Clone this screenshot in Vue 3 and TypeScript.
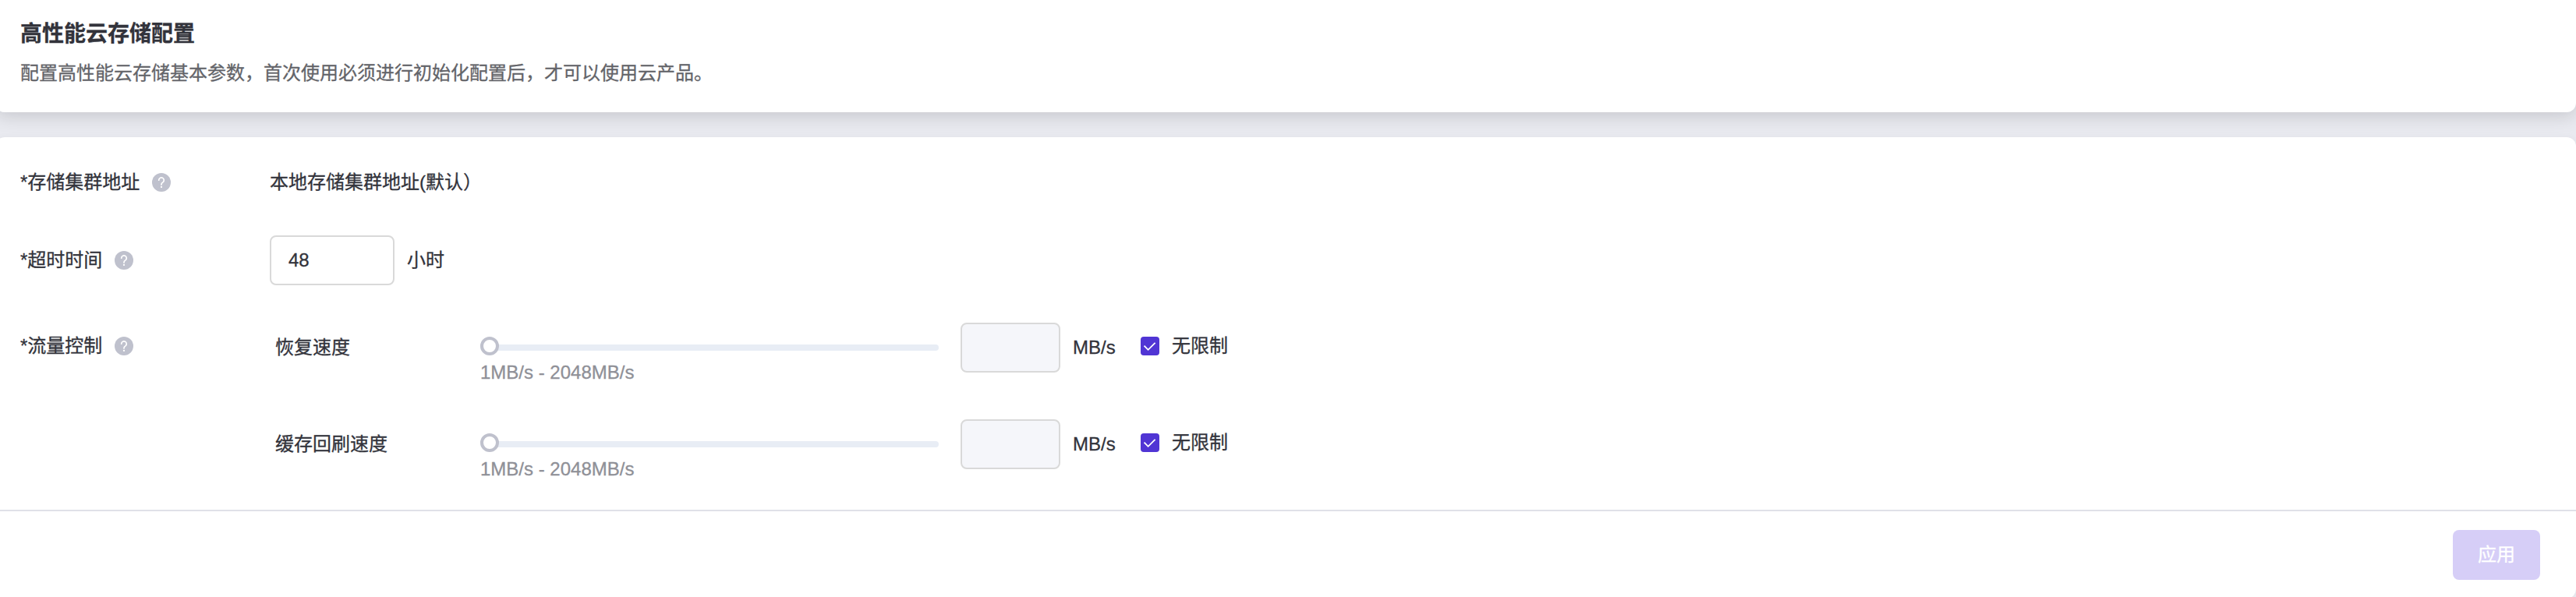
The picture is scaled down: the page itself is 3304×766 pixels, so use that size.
<script setup lang="ts">
import { ref } from 'vue'

interface Limit {
  label: string
  value: string
  unlimited: boolean
}

const timeout = ref('48')
const limits = ref<Limit[]>([
  { label: '恢复速度', value: '', unlimited: true },
  { label: '缓存回刷速度', value: '', unlimited: true },
])
const fields = ['存储集群地址', '超时时间', '流量控制']
</script>

<template>
  <div class="page">
    <header class="card head">
      <h1>高性能云存储配置</h1>
      <p>配置高性能云存储基本参数，首次使用必须进行初始化配置后，才可以使用云产品。</p>
    </header>

    <main class="card body">
      <section v-for="(field, i) in fields" :key="field" class="row" :class="'row-' + i">
        <div class="label">
          <span>*{{ field }}</span>
          <svg class="help" viewBox="0 0 24 24">
            <circle cx="12" cy="12" r="12" fill="#bfc1cd" />
            <path d="M8.7 9.2a3.3 3.3 0 1 1 5.2 2.7c-1.2.8-1.9 1.3-1.9 2.6v.4" fill="none" stroke="#fff" stroke-width="1.7" stroke-linecap="round" />
            <circle cx="12" cy="17.9" r="1.15" fill="#fff" />
          </svg>
        </div>

        <div v-if="i === 0" class="address">本地存储集群地址(默认）</div>

        <div v-else-if="i === 1" class="timeout">
          <input v-model="timeout" class="box" type="text" />
          <span>小时</span>
        </div>

        <div v-else class="limits">
          <div v-for="limit in limits" :key="limit.label" class="limit">
            <span class="name">{{ limit.label }}</span>
            <div class="slider">
              <div class="rail"><i class="knob"></i></div>
              <small>1MB/s - 2048MB/s</small>
            </div>
            <input v-model="limit.value" class="box speed" type="text" :disabled="limit.unlimited" />
            <span class="unit">MB/s</span>
            <div class="check">
              <svg class="tick" viewBox="0 0 24 24">
                <rect width="24" height="24" rx="4" fill="#5035d4" />
                <path d="M4.5 11.7l5.1 5.1 9-8.9" fill="none" stroke="#fff" stroke-width="1.8" />
              </svg>
              <span>无限制</span>
            </div>
          </div>
        </div>
      </section>

      <footer>
        <button type="button" disabled>应用</button>
      </footer>
    </main>
  </div>
</template>

<style>
body {
  margin: 0;
  background: #e9eaf0;
}
</style>

<style scoped>
.page {
  box-sizing: border-box;
  height: 766px;
  overflow: hidden;
  font: 24px/32px 'Liberation Sans', 'Noto Sans CJK SC', sans-serif;
  -webkit-text-stroke: 0.3px currentColor;
  color: #32333b;
  background: #e9eaf0;
}
.card {
  box-sizing: border-box;
  margin-left: -6px;
  background: #fff;
}
.head {
  height: 144px;
  padding: 24px 32px 0;
  border-radius: 0 0 12px 12px;
  box-shadow: 0 4px 24px rgba(0, 0, 0, 0.16);
}
h1 {
  margin: 0;
  font-size: 28px;
  line-height: 40px;
  font-weight: 700;
}
p {
  margin: 12px 0 0;
  line-height: 36px;
  color: #636469;
}
.body {
  position: relative;
  height: 592px;
  margin-top: 32px;
  padding-top: 26px;
  border-radius: 12px;
  box-shadow: 0 0 8px rgba(0, 0, 0, 0.04);
}
.row {
  display: flex;
  align-items: center;
  height: 64px;
  padding-left: 32px;
}
.row-1 {
  margin-top: 36px;
}
.row-2 {
  align-items: flex-start;
  height: 240px;
  margin-top: 48px;
}
.label {
  display: flex;
  align-items: center;
  gap: 16px;
  width: 320px;
  flex: none;
}
.row-2 .label {
  height: 60px;
}
.help {
  width: 24px;
  height: 24px;
}
.timeout {
  display: flex;
  align-items: center;
  gap: 16px;
}
.box {
  box-sizing: border-box;
  width: 160px;
  height: 64px;
  padding: 0 22px;
  border: 2px solid #d9d9d9;
  border-radius: 8px;
  background: #fff;
  font: inherit;
  color: inherit;
  -webkit-text-stroke: inherit;
  outline: none;
}
.box:disabled {
  background: #f5f6fa;
}
.limits {
  display: flex;
  flex-direction: column;
  gap: 60px;
  padding-left: 7px;
}
.limit {
  display: flex;
  align-items: center;
  height: 64px;
}
.name {
  width: 263px;
}
.slider {
  width: 588px;
  height: 64px;
  margin-right: 28px;
}
.rail {
  display: flex;
  align-items: center;
  height: 8px;
  margin: 28px 0 12px;
  border-radius: 4px;
  background: #e8edf5;
}
.knob {
  box-sizing: border-box;
  width: 24px;
  height: 24px;
  margin-top: -4px;
  border: 4px solid #bfc1cd;
  border-radius: 50%;
  background: #fff;
}
small {
  display: block;
  font-size: 24px;
  line-height: 32px;
  color: #8f9097;
}
.speed {
  width: 128px;
}
.unit {
  width: 55px;
  margin: 0 32px 0 16px;
}
.check {
  display: flex;
  align-items: center;
  gap: 16px;
  height: 60px;
  margin-bottom: 4px;
}
.tick {
  width: 24px;
  height: 24px;
}
footer {
  box-sizing: border-box;
  display: flex;
  justify-content: flex-end;
  height: 114px;
  padding: 24px 46px 0 0;
  border-top: 2px solid #e0e1e8;
}
button {
  width: 112px;
  height: 64px;
  padding: 0;
  border: 0;
  border-radius: 8px;
  background: #d6cef7;
  color: #fff;
  font: inherit;
}
</style>
